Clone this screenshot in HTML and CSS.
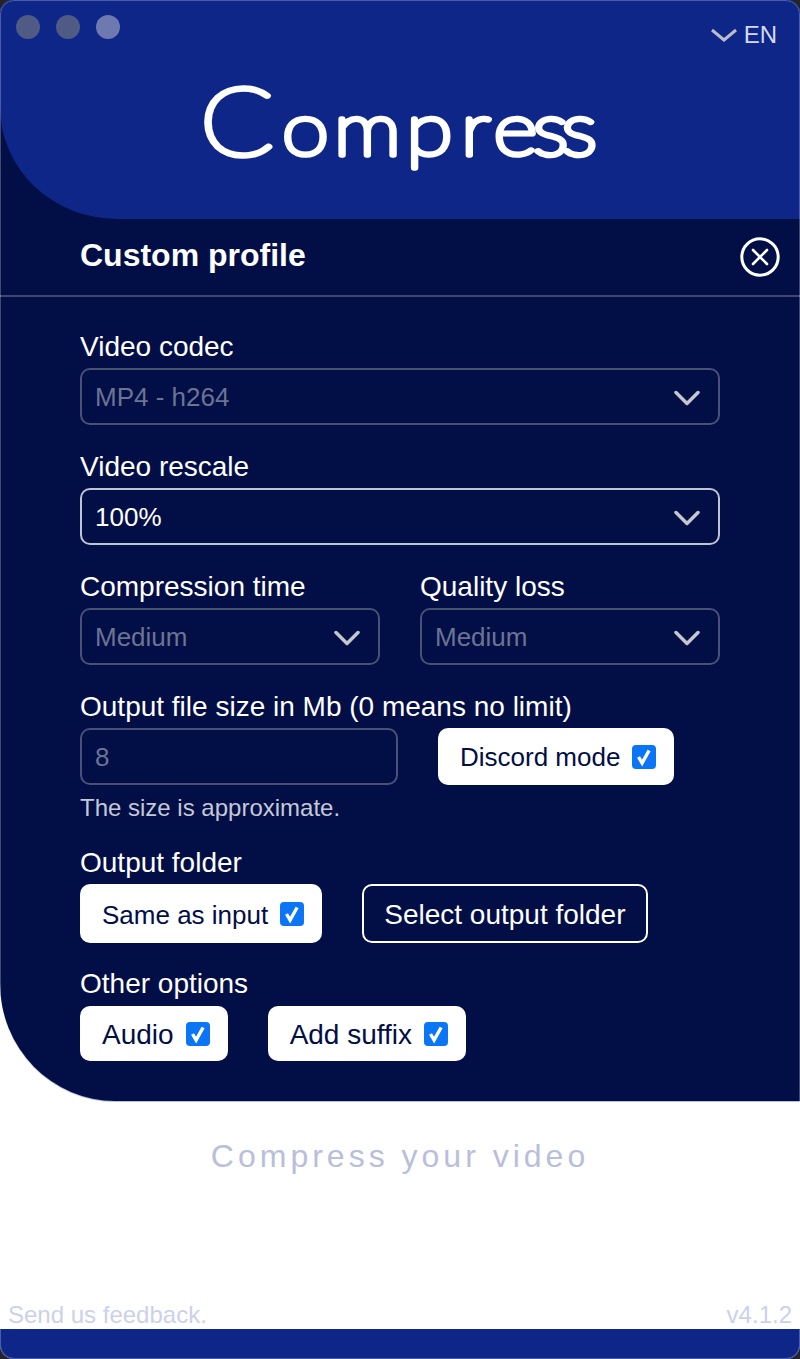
FILE: index.html
```html
<!DOCTYPE html>
<html lang="en">
<head>
    <meta charset="UTF-8">
    <meta name="viewport" content="width=device-width, initial-scale=1.0">
    <title>Compress</title>
    <link rel="stylesheet" href="styles.css">
</head>
<body>
    <div class="app">
        <div class="panel">
            <div class="header">
                <div class="top-row">
                    <div class="traffic">
                        <span class="dot"></span>
                        <span class="dot"></span>
                        <span class="dot dot-active"></span>
                    </div>
                    <div class="lang">
                        <svg class="lang-arrow" width="26" height="14" viewBox="0 0 26 14"><path d="M1 2l12 10L25 2"/></svg>
                        <span>EN</span>
                    </div>
                </div>
                <svg class="logo" width="420" height="132" viewBox="0 0 420 132">
                    <text y="105.5" transform="scale(1.15 1)"><tspan class="logo-c" x="8.7">C</tspan><tspan x="80 125 188 235.7 264 298 323">ompress</tspan></text>
                </svg>
            </div>

            <div class="title-row">
                <span class="title">Custom profile</span>
                <svg class="close" width="40" height="40" viewBox="0 0 40 40"><circle cx="20" cy="20" r="18.2"/><path d="M13 13l14 14M27 13l-14 14"/></svg>
            </div>

            <form class="form">
                <div class="form-group">
                    <div class="label">Video codec</div>
                    <div class="select disabled">
                        <span>MP4 - h264</span>
                        <svg class="arrow" width="26" height="16" viewBox="0 0 26 16"><path d="M2 2.5l11 11 11-11"/></svg>
                    </div>
                </div>
                <div class="form-group">
                    <div class="label">Video rescale</div>
                    <div class="select">
                        <span>100%</span>
                        <svg class="arrow" width="26" height="16" viewBox="0 0 26 16"><path d="M2 2.5l11 11 11-11"/></svg>
                    </div>
                </div>
                <div class="form-group columns">
                    <div class="column">
                        <div class="label">Compression time</div>
                        <div class="select disabled">
                            <span>Medium</span>
                            <svg class="arrow" width="26" height="16" viewBox="0 0 26 16"><path d="M2 2.5l11 11 11-11"/></svg>
                        </div>
                    </div>
                    <div class="column">
                        <div class="label">Quality loss</div>
                        <div class="select disabled">
                            <span>Medium</span>
                            <svg class="arrow" width="26" height="16" viewBox="0 0 26 16"><path d="M2 2.5l11 11 11-11"/></svg>
                        </div>
                    </div>
                </div>
                <div class="size-group">
                    <div class="label">Output file size in Mb (0 means no limit)</div>
                    <div class="row">
                        <input class="size-input" type="text" value="8" disabled>
                        <label class="check-btn tall">Discord mode
                            <span class="check"><svg width="24" height="24" viewBox="0 0 24 24"><path d="M6.5 12l3.6 6 7-12.5"/></svg></span>
                        </label>
                    </div>
                    <div class="note">The size is approximate.</div>
                </div>
                <div class="folder-group">
                    <div class="label">Output folder</div>
                    <div class="row">
                        <label class="check-btn folder">Same as input
                            <span class="check"><svg width="24" height="24" viewBox="0 0 24 24"><path d="M6.5 12l3.6 6 7-12.5"/></svg></span>
                        </label>
                        <button type="button" class="outline-btn">Select output folder</button>
                    </div>
                </div>
                <div class="options-group">
                    <div class="label">Other options</div>
                    <div class="row">
                        <label class="check-btn large">Audio
                            <span class="check"><svg width="24" height="24" viewBox="0 0 24 24"><path d="M6.5 12l3.6 6 7-12.5"/></svg></span>
                        </label>
                        <label class="check-btn large">Add suffix
                            <span class="check"><svg width="24" height="24" viewBox="0 0 24 24"><path d="M6.5 12l3.6 6 7-12.5"/></svg></span>
                        </label>
                    </div>
                </div>
            </form>
        </div>

        <div class="main">
            <div class="tagline">Compress your video</div>
            <div class="footer">
                <span>Send us feedback.</span>
                <span>v4.1.2</span>
            </div>
        </div>
        <div class="bottom-bar"></div>
    </div>
</body>
</html>
```

FILE: styles.css
```css
html, body {
    margin: 0;
    padding: 0;
    background-color: #23242a;
}
body {
    font-family: 'Liberation Sans', Arial, sans-serif;
    color: white;
}
.app {
    position: relative;
    width: 800px;
    height: 1359px;
    display: flex;
    flex-direction: column;
    background-color: white;
    border-radius: 14px;
    overflow: hidden;
}
/* thin window edge, on top of everything */
.app::after {
    content: "";
    position: absolute;
    inset: 0;
    border: 1px solid rgba(255, 255, 255, 0.25);
    border-radius: 14px;
    pointer-events: none;
}

.panel {
    height: 1101px;
    background-color: #020e46;
    border-bottom-left-radius: 115px 118px;
    box-shadow: 0 1px 0 #b9bedb;
}
.header {
    height: 219px;
    background-color: #0f2689;
    border-bottom-left-radius: 117px 112px;
}
.top-row {
    height: 50px;
    box-sizing: border-box;
    padding: 15px 23px 0 16px;
    display: flex;
    justify-content: space-between;
    align-items: flex-start;
}
.traffic {
    display: flex;
    gap: 16px;
}
.dot {
    width: 24px;
    height: 24px;
    border-radius: 50%;
    background-color: #4f5a85;
}
.dot-active {
    background-color: #6e79b0;
}
.lang {
    margin-top: 6px;
    display: flex;
    align-items: center;
    gap: 7px;
    font-size: 24px;
    color: #d5d9ee;
}
.lang-arrow path {
    fill: none;
    stroke: #b9bcc9;
    stroke-width: 3;
}
.logo {
    display: block;
    margin: 0 auto;
}
.logo text {
    font-family: 'Lato', sans-serif;
    font-weight: 100;
    font-size: 74px;
    fill: white;
    stroke: white;
    stroke-width: 5.5;
    stroke-linejoin: round;
}
.logo-c {
    font-size: 94px;
}

.title-row {
    height: 78px;
    box-sizing: border-box;
    padding: 0 20px 3px 80px;
    display: flex;
    align-items: center;
    justify-content: space-between;
    border-bottom: 2px solid #40466f;
}
.title {
    font-size: 32px;
    font-weight: bold;
}
.close {
    margin-top: 3px;
}
.close circle, .close path {
    fill: none;
    stroke: white;
    stroke-width: 3;
}
.close path {
    stroke-width: 2.6;
    stroke-linecap: round;
}

.form {
    padding: 34px 80px 0;
}
.form-group {
    margin-bottom: 26px;
}
.label {
    font-size: 28px;
    line-height: 32px;
    margin-bottom: 5px;
}
.select {
    height: 57px;
    box-sizing: border-box;
    padding: 2px 18px 0 13px;
    display: flex;
    align-items: center;
    justify-content: space-between;
    border: 2px solid #c0c3d0;
    border-radius: 10px;
    font-size: 26px;
}
.select.disabled {
    border-color: #4a5177;
    color: #6c7393;
}
.arrow path {
    fill: none;
    stroke: #c6c7cc;
    stroke-width: 3.5;
    stroke-linecap: round;
    stroke-linejoin: round;
}
.columns {
    display: flex;
    gap: 40px;
}
.column {
    flex: 1;
}
.row {
    display: flex;
    gap: 40px;
}
.size-input {
    width: 318px;
    height: 57px;
    box-sizing: border-box;
    padding: 2px 13px 0;
    background: none;
    border: 2px solid #4a5177;
    border-radius: 10px;
    font-family: inherit;
    font-size: 26px;
    color: #6c7393;
}
.note {
    margin-top: 8px;
    font-size: 24px;
    line-height: 30px;
    color: #c5c8d6;
}
.folder-group {
    margin-top: 24px;
}
.options-group {
    margin-top: 25px;
}
.options-group .label {
    margin-bottom: 6px;
}
.check-btn {
    height: 55px;
    box-sizing: border-box;
    padding: 2px 18px 0 22px;
    display: flex;
    align-items: center;
    gap: 12px;
    background-color: white;
    border-radius: 10px;
    font-size: 26px;
    color: #020e46;
}
.check-btn.tall {
    height: 57px;
}
.check-btn.folder {
    height: 59px;
    padding-top: 4px;
}
.check-btn.large {
    font-size: 28px;
}
.check {
    width: 24px;
    height: 24px;
    display: block;
    margin-top: -1px;
    background-color: #0a76f6;
    border-radius: 4px;
}
.check-btn.folder .check {
    margin-top: -3px;
}
.check svg {
    display: block;
}
.check path {
    fill: none;
    stroke: white;
    stroke-width: 3.4;
}
.outline-btn {
    height: 59px;
    box-sizing: border-box;
    padding: 2px 20px 0;
    background: none;
    border: 2px solid white;
    border-radius: 10px;
    font-family: inherit;
    font-size: 28px;
    color: white;
}

.main {
    flex: 1;
    display: flex;
    flex-direction: column;
    justify-content: space-between;
}
.tagline {
    margin-top: 35px;
    text-align: center;
    font-size: 32px;
    line-height: 40px;
    letter-spacing: 4px;
    color: #b9bedb;
}
.footer {
    padding: 0 8px;
    display: flex;
    justify-content: space-between;
    font-size: 24px;
    line-height: 28px;
    color: #ccd1ea;
}
.bottom-bar {
    height: 30px;
    background-color: #0f2689;
}
```
